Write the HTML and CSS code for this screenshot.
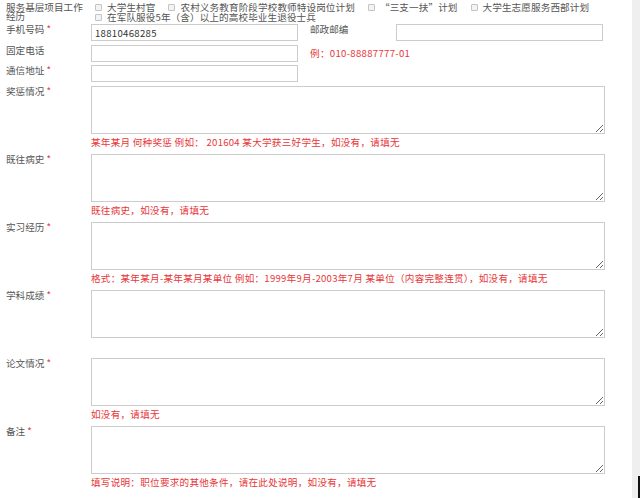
FILE: index.html
```html
<!DOCTYPE html>
<html lang="zh-CN">
<head>
<meta charset="UTF-8">
<title>报名信息</title>
<link rel="stylesheet" href="styles.css">
</head>
<body>

<div class="page">
  <form class="form">

    <!-- 服务基层项目 -->
    <div class="row row-top">
      <div class="label label-wrap">服务基层项目工作经历</div>
      <div class="checks">
        <div class="check-line">
          <label class="check"><input type="checkbox">大学生村官</label>
          <label class="check"><input type="checkbox">农村义务教育阶段学校教师特设岗位计划</label>
          <label class="check"><input type="checkbox">“三支一扶”计划</label>
          <label class="check"><input type="checkbox">大学生志愿服务西部计划</label>
        </div>
        <div class="check-line">
          <label class="check"><input type="checkbox">在军队服役5年（含）以上的高校毕业生退役士兵</label>
        </div>
      </div>
    </div>

    <div class="fields">
      <div class="row row-field">
        <div class="label">手机号码 <span class="req">*</span></div>
        <input class="text" type="text" value="18810468285">
        <div class="label label-side">邮政邮编</div>
        <input class="text" type="text">
      </div>
      <div class="row row-field">
        <div class="label">固定电话</div>
        <input class="text" type="text">
        <span class="note">例：010-88887777-01</span>
      </div>
      <div class="row row-field">
        <div class="label">通信地址 <span class="req">*</span></div>
        <input class="text" type="text">
      </div>
    </div>

    <div class="row row-area">
      <div class="label">奖惩情况 <span class="req">*</span></div>
      <div class="area-body">
        <textarea></textarea>
        <div class="hint">某年某月 何种奖惩 例如： 201604 某大学获三好学生，如没有，请填无</div>
      </div>
    </div>

    <div class="row row-area">
      <div class="label">既往病史 <span class="req">*</span></div>
      <div class="area-body">
        <textarea></textarea>
        <div class="hint">既往病史，如没有，请填无</div>
      </div>
    </div>

    <div class="row row-area">
      <div class="label">实习经历 <span class="req">*</span></div>
      <div class="area-body">
        <textarea></textarea>
        <div class="hint">格式：某年某月-某年某月某单位 例如：1999年9月-2003年7月 某单位（内容完整连贯），如没有，请填无</div>
      </div>
    </div>

    <div class="row row-area">
      <div class="label">学科成绩 <span class="req">*</span></div>
      <div class="area-body">
        <textarea></textarea>
        <div class="hint"></div>
      </div>
    </div>

    <div class="row row-area">
      <div class="label">论文情况 <span class="req">*</span></div>
      <div class="area-body">
        <textarea></textarea>
        <div class="hint">如没有，请填无</div>
      </div>
    </div>

    <div class="row row-area">
      <div class="label">备注 <span class="req">*</span></div>
      <div class="area-body">
        <textarea></textarea>
        <div class="hint">填写说明：职位要求的其他条件，请在此处说明，如没有，请填无</div>
      </div>
    </div>

  </form>

  <div class="track"><div class="thumb"></div></div>
</div>

</body>
</html>
```

FILE: styles.css
```css
* {
  box-sizing: border-box;
}

html {
  overflow: hidden;
}

body {
  margin: 0;
  font-family: "Noto Sans CJK SC", "Noto Sans", sans-serif;
  font-size: 9.6px;
  color: #555;
  background-color: #fff;
}

.page {
  display: flex;
  height: 498px;
}

.form {
  flex: 1;
  padding-left: 6px;
}

/* rows */
.row {
  display: flex;
  align-items: flex-start;
}

.label {
  flex: none;
  width: 85px;
  line-height: 10px;
  white-space: nowrap;
}

.req {
  color: #e8373a;
}

/* top checkbox row */
.row-top {
  height: 24px;
}

.label-wrap {
  white-space: normal;
  line-height: 8.5px;
  padding-top: 3px;
}

.checks {
  width: 514px;
  padding-top: 2px;
  line-height: 10px;
}

.check-line {
  display: flex;
  height: 10px;
}

.check {
  display: flex;
  align-items: center;
  margin-right: 9px;
  white-space: nowrap;
  letter-spacing: 0.1px;
}

.check input {
  -webkit-appearance: none;
  appearance: none;
  width: 7px;
  height: 7px;
  margin: 0 5px 0 4px;
  border: 1px solid #c4c4c4;
  border-radius: 1px;
  background-color: #f3f3f3;
}

/* single line fields */
.fields {
  margin-bottom: 1.5px;
}

.row-field {
  height: 17px;
  margin-bottom: 3.5px;
}

.text {
  width: 207px;
  height: 17px;
  margin: 0;
  padding: 0 3px;
  border: 1px solid #ccc;
  font-family: inherit;
  font-size: 9.6px;
  letter-spacing: 0.3px;
  color: #333;
}

.label-side {
  width: 86px;
  margin-left: 12px;
}

.note {
  margin-left: 12px;
  line-height: 17px;
  letter-spacing: 0.3px;
  color: #e8373a;
}

/* textarea rows */
.row-area {
  margin-bottom: 5px;
}

.area-body {
  width: 514px;
}

.area-body textarea {
  display: block;
  width: 514px;
  height: 48px;
  margin: 0;
  padding: 2px;
  border: 1px solid #ccc;
  font-family: inherit;
  font-size: 9.6px;
}

.hint {
  height: 14px;
  margin-top: 1px;
  line-height: 14px;
  color: #e8373a;
  white-space: nowrap;
  letter-spacing: 0.25px;
}

/* page scrollbar */
.track {
  flex: none;
  width: 8px;
  display: flex;
  flex-direction: column;
  justify-content: flex-end;
  align-items: flex-end;
  background-color: #efefef;
}

.thumb {
  width: 2px;
  height: 22px;
  background-color: #111;
}
```
